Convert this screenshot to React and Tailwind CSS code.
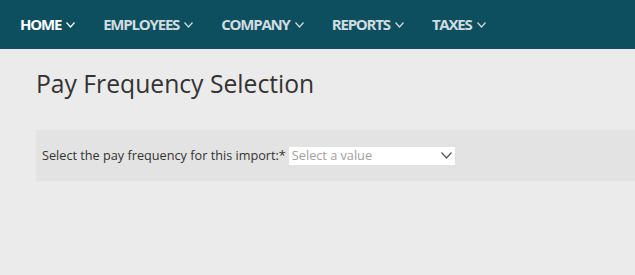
import React from "react";

const navItems = [
  { label: "HOME", active: true },
  { label: "EMPLOYEES" },
  { label: "COMPANY" },
  { label: "REPORTS" },
  { label: "TAXES" },
];

const Chevron = ({ className, w = 9, h = 5 }) => (
  <svg width={w} height={h + 1} viewBox={`0 0 ${w} ${h + 1}`} className={className} fill="none">
    <path d={`M0.5 0.5 L${w / 2} ${h} L${w - 0.5} 0.5`} stroke="currentColor" strokeWidth="1.2" />
  </svg>
);

const App = () => {
  return (
    <div className="w-[635px] h-[275px] bg-[#ebebeb] overflow-hidden" style={{ fontFamily: '"Open Sans", sans-serif' }}>
      <nav className="h-[49px] bg-[#0e4f5f] flex items-center pl-[20px] gap-[28px]">
        {navItems.map((item) => (
          <div
            key={item.label}
            className={`flex items-center text-[15px] font-bold tracking-[-1.2px] ${
              item.active ? "text-white" : "text-[#d0dde0]"
            }`}
          >
            <span>{item.label}</span>
            <Chevron className="ml-[5px]" />
          </div>
        ))}
      </nav>
      <div className="pl-[36px]">
        <h1 className="pt-[18px] text-[24.7px] text-[#333] leading-[34px]">Pay Frequency Selection</h1>
        <div className="mt-[29px] h-[51px] bg-[#e3e3e3] flex items-center pl-[6px]">
          <span className="text-[12.7px] text-[#333]">Select the pay frequency for this import:*</span>
          <div className="ml-[3px] w-[166px] h-[18px] bg-white flex items-center justify-between pl-[3px] pr-[3px]">
            <span className="text-[12.7px] text-[#a0a0a0]">Select a value</span>
            <Chevron className="text-[#555]" w={11} h={6} />
          </div>
        </div>
      </div>
    </div>
  );
};

export default App;
